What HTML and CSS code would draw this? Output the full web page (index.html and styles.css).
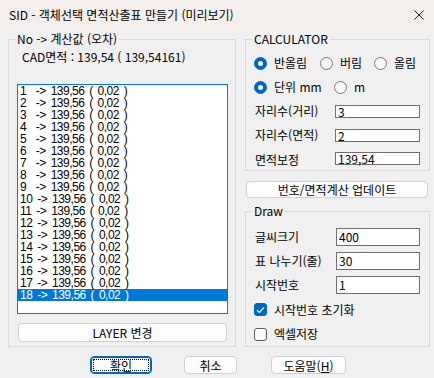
FILE: index.html
```html
<!DOCTYPE html>
<html lang="ko">
<head>
<meta charset="utf-8">
<title>SID - 객체선택 면적산출표 만들기 (미리보기)</title>
<link rel="stylesheet" href="styles.css">
</head>
<body>
<div class="window">
  <div class="titlebar">
    <span class="title">SID - 객체선택 면적산출표 만들기 (미리보기)</span>
    <svg class="close" width="10" height="10" viewBox="0 0 10 10"><path d="M0.5 0.5 L9.5 9.5 M9.5 0.5 L0.5 9.5" stroke="#1a1a1a" stroke-width="1" fill="none"/></svg>
  </div>
  <div class="main">
    <fieldset class="group left">
      <legend>No -&gt; 계산값 (오차)</legend>
      <div class="cad">CAD면적 : 139,54 ( 139,54161)</div>
      <div class="listbox">
        <div class="lrow">1  -&gt; 139,56 ( 0,02 )</div>
        <div class="lrow">2  -&gt; 139,56 ( 0,02 )</div>
        <div class="lrow">3  -&gt; 139,56 ( 0,02 )</div>
        <div class="lrow">4  -&gt; 139,56 ( 0,02 )</div>
        <div class="lrow">5  -&gt; 139,56 ( 0,02 )</div>
        <div class="lrow">6  -&gt; 139,56 ( 0,02 )</div>
        <div class="lrow">7  -&gt; 139,56 ( 0,02 )</div>
        <div class="lrow">8  -&gt; 139,56 ( 0,02 )</div>
        <div class="lrow">9  -&gt; 139,56 ( 0,02 )</div>
        <div class="lrow">10 -&gt; 139,56 ( 0,02 )</div>
        <div class="lrow">11 -&gt; 139,56 ( 0,02 )</div>
        <div class="lrow">12 -&gt; 139,56 ( 0,02 )</div>
        <div class="lrow">13 -&gt; 139,56 ( 0,02 )</div>
        <div class="lrow">14 -&gt; 139,56 ( 0,02 )</div>
        <div class="lrow">15 -&gt; 139,56 ( 0,02 )</div>
        <div class="lrow">16 -&gt; 139,56 ( 0,02 )</div>
        <div class="lrow">17 -&gt; 139,56 ( 0,02 )</div>
        <div class="lrow sel">18 -&gt; 139,56 ( 0,02 )</div>
      </div>
      <button class="btn layer-btn" type="button">LAYER 변경</button>
    </fieldset>

    <div class="rightcol">
      <fieldset class="group calc">
        <legend>CALCULATOR</legend>
        <div class="rrow">
          <label class="opt w66"><span class="radio on"></span>반올림</label>
          <label class="opt w54"><span class="radio"></span>버림</label>
          <label class="opt"><span class="radio"></span>올림</label>
        </div>
        <div class="rrow">
          <label class="opt w80"><span class="radio on"></span>단위 mm</label>
          <label class="opt"><span class="radio"></span>m</label>
        </div>
        <div class="frow">
          <span class="flabel">자리수(거리)</span>
          <span class="edit">3</span>
        </div>
        <div class="frow">
          <span class="flabel">자리수(면적)</span>
          <span class="edit">2</span>
        </div>
        <div class="frow last">
          <span class="flabel">면적보정</span>
          <span class="edit">139,54</span>
        </div>
      </fieldset>

      <button class="btn update-btn" type="button">번호/면적계산 업데이트</button>

      <fieldset class="group draw">
        <legend>Draw</legend>
        <div class="frow">
          <span class="flabel wide">글씨크기</span>
          <span class="edit tall">400</span>
        </div>
        <div class="frow">
          <span class="flabel wide">표 나누기(줄)</span>
          <span class="edit tall">30</span>
        </div>
        <div class="frow">
          <span class="flabel wide">시작번호</span>
          <span class="edit tall">1</span>
        </div>
        <div class="crow">
          <span class="check on"><svg width="9" height="8" viewBox="0 0 9 8"><path d="M1 4.2 L3.4 6.4 L8 1.4" stroke="#fff" stroke-width="1.3" fill="none"/></svg></span>
          <span>시작번호 초기화</span>
        </div>
        <div class="crow">
          <span class="check"></span>
          <span>엑셀저장</span>
        </div>
      </fieldset>
    </div>
  </div>

  <div class="footer">
    <button class="btn ok" type="button"><span class="focus">확인</span></button>
    <button class="btn cancel" type="button">취소</button>
    <button class="btn help" type="button">도움말(<u>H</u>)</button>
  </div>
</div>
</body>
</html>
```

FILE: styles.css
```css
* { box-sizing: border-box; }
html, body { margin: 0; padding: 0; }
body {
  width: 434px;
  height: 378px;
  overflow: hidden;
  background: #f0f0f0;
  font-family: "Noto Sans CJK KR", "Noto Sans", sans-serif;
  font-size: 12px;
  color: #000;
}
.window { width: 434px; height: 378px; background: #f0f0f0; }

.titlebar {
  height: 29px;
  background: #f4eeed;
  display: flex;
  align-items: center;
  justify-content: space-between;
  padding: 0 10px 0 9px;
}
.title { font-size: 12px; line-height: 16px; color: #000; }
.close { display: block; }

.main {
  display: flex;
  padding: 2px 0 0 8px;
  gap: 8px;
}

.group {
  margin: 0;
  padding: 0;
  border: 1px solid #dadada;
  min-width: 0;
}
.group legend {
  margin-left: 6px;
  padding: 0 2px;
  line-height: 16px;
  height: 16px;
  font-size: 12px;
}

.left { width: 228px; }
.cad { margin: 2px 0 0 13px; line-height: 16px; height: 16px; }
.listbox {
  margin: 19px 7px 0 8px;
  height: 230px;
  border: 1px solid #0078d7;
  background: #fff;
}
.lrow {
  height: 12px;
  line-height: 12px;
  padding-left: 2px;
  white-space: pre;
  letter-spacing: -0.5px;
  word-spacing: 2px;
  font-family: "Liberation Sans", Arial, sans-serif;
  font-size: 12px;
}
.lrow.sel { background: #0078d7; color: #fff; }

.btn {
  display: flex;
  align-items: center;
  justify-content: center;
  margin: 0;
  padding: 0;
  background: #fdfdfd;
  border: 1px solid #d0d0d0;
  border-radius: 4px;
  font-family: "Noto Sans CJK KR", "Noto Sans", sans-serif;
  font-size: 12px;
  color: #000;
}
.layer-btn { margin: 9px 8px 4px 9px; width: 209px; height: 19px; }

.rightcol { width: 185px; margin-left: 1px; display: flex; flex-direction: column; }

.calc { padding: 4px 0 2px 0; }
.rrow { height: 24px; display: flex; align-items: center; padding-left: 8px; }
.opt { display: flex; align-items: center; gap: 7px; line-height: 16px; }
.w66 { width: 66px; }
.w54 { width: 54px; }
.w80 { width: 80px; }
.radio {
  width: 13px;
  height: 13px;
  border-radius: 50%;
  border: 1px solid #7a7a7a;
  background: #f7f7f7;
  flex: none;
  display: flex;
  align-items: center;
  justify-content: center;
}
.radio.on { border-color: #0067c0; background: #0067c0; }
.radio.on::after {
  content: "";
  width: 5px;
  height: 5px;
  border-radius: 50%;
  background: #fff;
}

.frow { height: 24px; display: flex; align-items: center; padding-left: 9px; }
.frow.last { height: 21px; align-items: flex-start; padding-top: 5px; }
.flabel { width: 80px; line-height: 16px; }
.flabel.wide { width: 81px; }
.edit {
  width: 85px;
  height: 13px;
  border: 1px solid #6f6f6f;
  background: #fff;
  padding-left: 2px;
  line-height: 11px;
  font-size: 12px;
}
.edit.tall { width: 84px; height: 18px; line-height: 15px; }

.update-btn { margin: 10px 0 0 1px; width: 182px; height: 17px; }

.draw { margin-top: 5px; padding: 6px 0 0 0; }
.crow { height: 25px; display: flex; align-items: center; padding-left: 8px; gap: 7px; line-height: 16px; }
.crow:last-child { height: 24px; }
.check {
  width: 13px;
  height: 13px;
  border-radius: 3px;
  border: 1px solid #5f5f5f;
  background: #f9f9f9;
  flex: none;
  display: flex;
  align-items: center;
  justify-content: center;
}
.check.on { border-color: #0067c0; background: #0067c0; }
.check svg { display: block; }

.footer { display: flex; padding: 9px 0 0 90px; }
.ok {
  width: 62px;
  height: 18px;
  border: 1px solid #0067c0;
  box-shadow: inset 0 0 0 1px #0067c0;
  padding: 2px;
}
.ok .focus {
  flex: 1;
  align-self: stretch;
  border: 1px dotted #000;
  display: flex;
  align-items: center;
  justify-content: center;
}
.cancel { width: 53px; height: 18px; margin-left: 32px; }
.help { width: 75px; height: 18px; margin-left: 34px; }
.help u { text-decoration: underline; text-underline-offset: 1px; }
```
